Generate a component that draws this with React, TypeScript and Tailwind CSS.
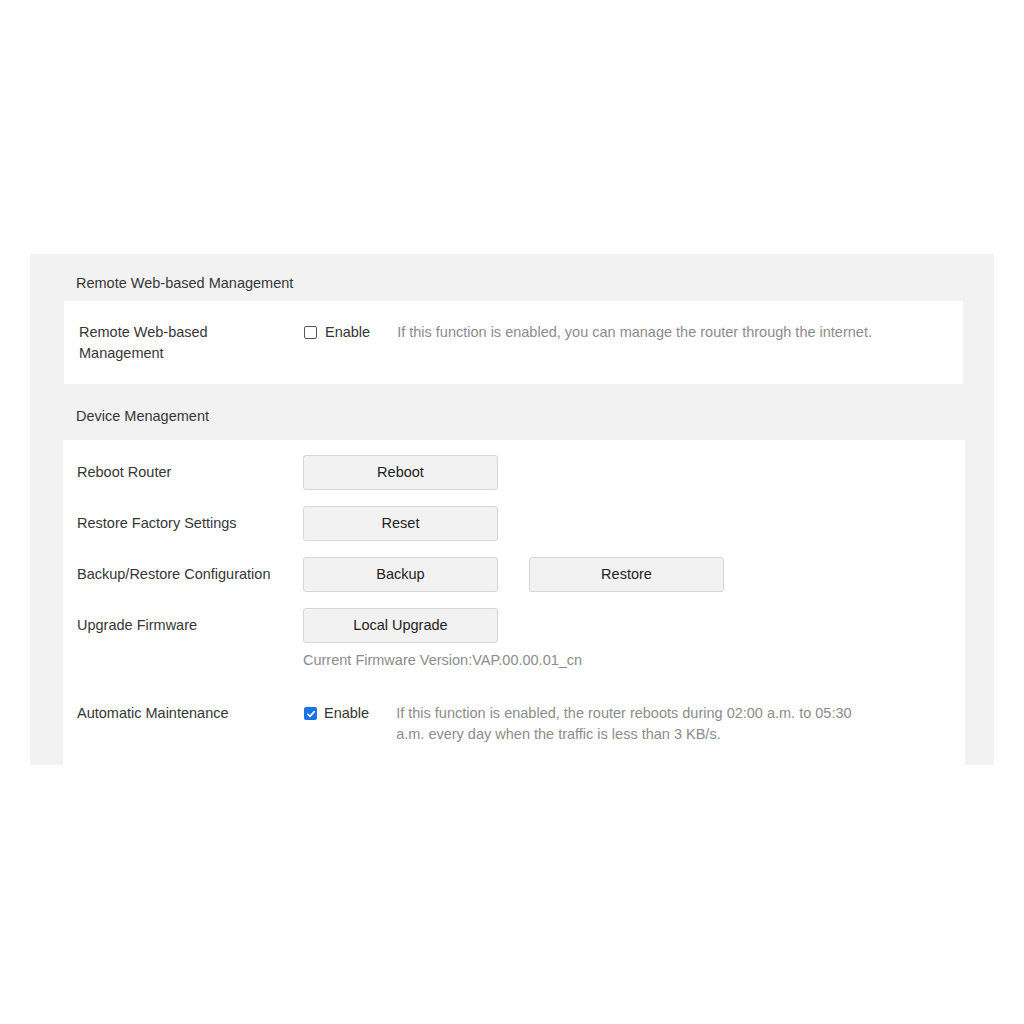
import React from "react";

function Btn({ children }: { children: React.ReactNode }) {
  return (
    <button className="h-[35px] w-[195px] rounded-[3px] border border-[#d6d6d6] bg-[#f2f2f2] text-[14.5px] text-[#222] leading-none">
      {children}
    </button>
  );
}

function Check({ checked }: { checked?: boolean }) {
  if (checked) {
    return (
      <span className="flex h-[13px] w-[13px] items-center justify-center rounded-[2px] bg-[#1a73e8]">
        <svg width="10" height="10" viewBox="0 0 10 10">
          <path d="M1.8 5.2 L4 7.4 L8.3 2.6" fill="none" stroke="#fff" strokeWidth="1.6" strokeLinecap="round" strokeLinejoin="round" />
        </svg>
      </span>
    );
  }
  return <span className="block h-[13px] w-[13px] rounded-[2px] border border-[#555] bg-white" />;
}

export default function App() {
  return (
    <div
      className="min-h-[1024px] w-[1024px] bg-white pt-[254px] pl-[30px]"
      style={{ fontFamily: '"Liberation Sans", Arial, sans-serif' }}
    >
      <div className="w-[964px] bg-[#f2f2f2] text-[14.5px] text-[#363636]">
        <div className="pl-[46px] pt-[19px] pb-[8px] leading-[20px]">Remote Web-based Management</div>
        <div className="ml-[34px] mr-[31px] flex bg-white pt-[21px] pb-[20px] pl-[15px] leading-[21px]">
          <div className="w-[224px]">
            Remote Web-based
            <br />
            Management
          </div>
          <div className="flex h-[21px] items-center">
            <span className="ml-[1px]">
              <Check />
            </span>
            <span className="ml-[8px]">Enable</span>
            <span className="ml-[27px] text-[#8c8c8c]">
              If this function is enabled, you can manage the router through the internet.
            </span>
          </div>
        </div>
        <div className="pl-[46px] pt-[22px] pb-[14px] leading-[20px]">Device Menagement</div>
        <div className="ml-[33px] mr-[29px] bg-white pl-[14px] pt-[15px] pb-[20px]">
          <div className="flex flex-col gap-[16px]">
            <div className="flex items-center">
              <div className="w-[226px]">Reboot Router</div>
              <Btn>Reboot</Btn>
            </div>
            <div className="flex items-center">
              <div className="w-[226px]">Restore Factory Settings</div>
              <Btn>Reset</Btn>
            </div>
            <div className="flex items-center">
              <div className="w-[226px]">Backup/Restore Configuration</div>
              <Btn>Backup</Btn>
              <div className="w-[31px]" />
              <Btn>Restore</Btn>
            </div>
            <div className="flex items-center">
              <div className="w-[226px]">Upgrade Firmware</div>
              <Btn>Local Upgrade</Btn>
            </div>
          </div>
          <div className="mt-[7px] pl-[226px] leading-[20px] text-[#8c8c8c]">
            Current Firmware Version:VAP.00.00.01_cn
          </div>
          <div className="mt-[33px] flex leading-[21px]">
            <div className="w-[227px]">Automatic Maintenance</div>
            <div className="flex h-[21px] items-center">
              <Check checked />
            </div>
            <span className="ml-[7px]">Enable</span>
            <span className="ml-[27px] w-[470px] text-[#8c8c8c]">
              If this function is enabled, the router reboots during 02:00 a.m. to 05:30 a.m. every day when the traffic is less than 3 KB/s.
            </span>
          </div>
        </div>
      </div>
    </div>
  );
}
